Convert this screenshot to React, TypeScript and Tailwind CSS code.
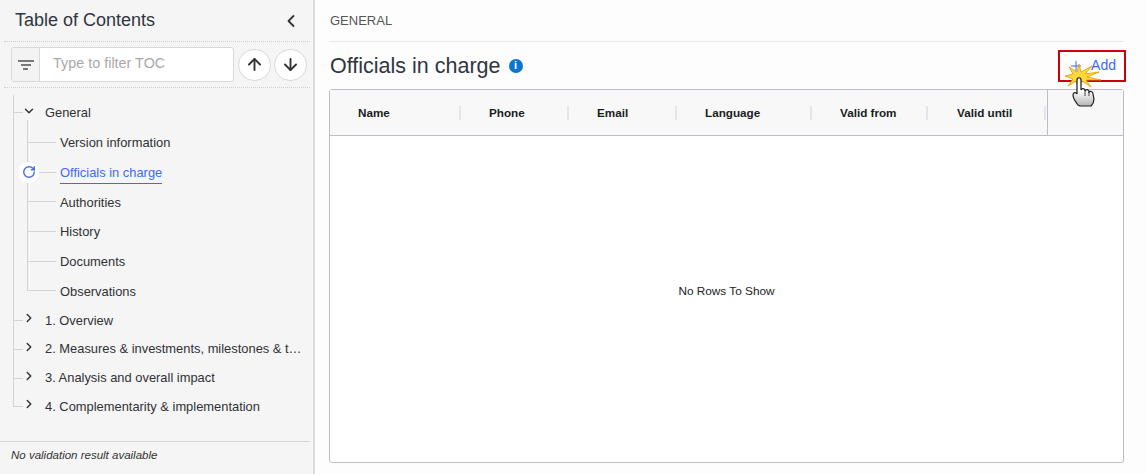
import React from 'react';
import { ArrowDown, ArrowUp, ChevronDown, ChevronLeft, ChevronRight, Plus, RotateCw } from 'lucide-react';

const font = { fontFamily: '"Liberation Sans", Arial, sans-serif' };

const sections = ['Version information', 'Officials in charge', 'Authorities', 'History', 'Documents', 'Observations'];
const chapters = [
  '1. Overview',
  '2. Measures & investments, milestones & targets',
  '3. Analysis and overall impact',
  '4. Complementarity & implementation',
];
const columns = [
  { name: 'Name', width: 'w-[131px]', pad: 'pl-[28px]' },
  { name: 'Phone', width: 'w-[108px]', pad: 'pl-[28px]' },
  { name: 'Email', width: 'w-[108px]', pad: 'pl-[28px]' },
  { name: 'Language', width: 'w-[135px]', pad: 'pl-[28px]' },
  { name: 'Valid from', width: 'w-[116px]', pad: 'pl-[28px]' },
  { name: 'Valid until', width: 'w-[118px]', pad: 'pl-[29px]' },
];

// click marker + hand cursor sitting over the Add button
const Burst = () => (
  <svg className="absolute left-[-2px] top-[11px]" width="52" height="46" viewBox="0 0 52 46">
    <defs>
      <linearGradient id="hand" x1="0" y1="0" x2="0" y2="1">
        <stop offset="0.45" stopColor="#ffffff" />
        <stop offset="1" stopColor="#b5b5b5" />
      </linearGradient>
    </defs>
    <polygon
      points="21,1 23,9 34,3 27,11 41,9 29,14 43,17 28,17 33,24 24,18 21,26 18,18 10,23 15,16 7,13 15,11 11,4 19,9"
      fill="#fcd93a"
      stroke="#e09a00"
      strokeWidth="0.8"
    />
    <path
      d="M20 42 C18 39 15 36 15 32 C15 29 18 29 19 31 L19 17 C19 14 23 14 23 17 L23 27 C24 25 27 25 27 28 C28 26 31 26 31 29 C32 28 35 28 35 31 L36 36 C36 39 34 42 33 43 L22 43 Z"
      fill="url(#hand)"
      stroke="#1c1c1c"
      strokeWidth="1.2"
    />
    <path d="M27 28 L27 33 M31 29 L31 33" stroke="#1c1c1c" strokeWidth="0.8" />
  </svg>
);

export default function App() {
  return (
    <div className="flex h-[474px] w-[1147px] overflow-hidden bg-[#fdfdfd] text-[#2f3136]" style={font}>
      {/* TOC panel */}
      <aside className="flex h-full w-[315px] shrink-0 flex-col border-r-2 border-[#dcdcdc] bg-[#f5f5f5]">
        <div className="flex h-[41px] items-center justify-between pl-[15px] pr-[12px]">
          <h2 className="text-[18px] text-[#2f3640]">Table of Contents</h2>
          <ChevronLeft size={20} strokeWidth={2.2} className="text-[#333]" />
        </div>
        <div className="mx-[4px] flex h-[47px] w-[306px] items-center border-y border-dotted border-[#cfcfcf] pl-[7px]">
          <div className="flex h-[35px] w-[223px] overflow-hidden rounded-[3px] border border-[#d9d9d9] bg-white">
            <div className="flex w-[28px] flex-col items-center justify-center gap-[2px] border-r border-[#d9d9d9] bg-[#f3f3f3]">
              <span className="h-[2px] w-[16px] bg-[#777]" />
              <span className="h-[2px] w-[10px] bg-[#777]" />
              <span className="h-[2px] w-[5px] bg-[#777]" />
            </div>
            <div className="flex items-center pb-[2px] pl-[13px] text-[14.4px] text-[#a9a9a9]">Type to filter TOC</div>
          </div>
          <button className="ml-[4px] flex h-[32px] w-[33px] items-center justify-center rounded-full border border-[#d9d9d9] bg-white">
            <ArrowUp size={19} strokeWidth={2.4} className="text-[#333]" />
          </button>
          <button className="ml-[3px] flex h-[32px] w-[33px] items-center justify-center rounded-full border border-[#d9d9d9] bg-white">
            <ArrowDown size={19} strokeWidth={2.4} className="text-[#333]" />
          </button>
        </div>

        {/* tree */}
        <div className="mt-[10px] flex-1 text-[12.9px]">
          <div className="relative flex h-[30px] items-center">
            <span className="absolute left-[13px] top-[-3px] bottom-0 w-px bg-[#d4d4d4]" />
            <span className="absolute left-[14px] top-[14px] h-px w-[9px] bg-[#d4d4d4]" />
            <span className="absolute left-[27px] top-[22px] bottom-0 w-px bg-[#d4d4d4]" />
            <ChevronDown size={14} strokeWidth={2.5} className="absolute left-[22px] top-[6px] text-[#333]" />
            <span className="pl-[45px]">General</span>
          </div>
          {sections.map((s, i) => {
            const active = i === 1;
            const last = i === sections.length - 1;
            return (
              <div key={s} className="relative flex h-[29.7px] items-center">
                <span className="absolute left-[13px] top-0 bottom-0 w-px bg-[#d4d4d4]" />
                <span className={`absolute left-[27px] top-0 w-px bg-[#d4d4d4] ${last ? 'h-[15px]' : 'bottom-0'}`} />
                <span className="absolute left-[28px] top-[14px] h-px w-[28px] bg-[#d4d4d4]" />
                {active && (
                  <span className="absolute left-[18px] top-[4px] flex h-[21px] w-[21px] items-center justify-center rounded-full bg-white">
                    <RotateCw size={14} strokeWidth={2.5} className="text-[#4a70e0]" />
                  </span>
                )}
                <span className={`ml-[60px] ${active ? 'border-b border-[#3f6af0] pb-[1px] pt-[2px] text-[#3f6af0]' : ''}`}>{s}</span>
              </div>
            );
          })}
          {chapters.map((c, i) => (
            <div key={c} className="relative flex h-[28.7px] items-center">
              <span className={`absolute left-[13px] top-0 w-px bg-[#d4d4d4] ${i === chapters.length - 1 ? 'h-[15px]' : 'bottom-0'}`} />
              <span className="absolute left-[14px] top-[14px] h-px w-[9px] bg-[#d4d4d4]" />
              <ChevronRight size={14} strokeWidth={2.5} className="absolute left-[22px] top-[5px] text-[#333]" />
              <span className="ml-[45px] w-[258px] truncate">{c}</span>
            </div>
          ))}
        </div>

        <div className="flex h-[33px] w-[310px] items-center border-t border-[#d6d6d6] pb-[5px] pl-[11px] text-[11.5px] italic text-[#333]">
          No validation result available
        </div>
      </aside>

      {/* main content */}
      <main className="flex h-full flex-1 flex-col pl-[14px] pr-[23px]">
        <div className="flex h-[42px] items-center border-b border-[#e8e8e8] pl-px text-[13px] text-[#555]">GENERAL</div>
        <div className="flex h-[47px] items-center justify-between">
          <div className="flex items-center gap-[8px] pl-px">
            <h1 className="pt-[1px] text-[21.5px] text-[#2f3640]">Officials in charge</h1>
            <span className="flex h-[14px] w-[14px] items-center justify-center rounded-full bg-[#0b76d1] text-[11px] font-bold leading-none text-white">
              i
            </span>
          </div>
          <div className="relative -mr-[2px] flex h-[32px] w-[68px] items-center justify-end gap-[7px] border-2 border-[#c8000f] pr-[8px] text-[14px] text-[#3f6af0]">
            <Plus size={16} strokeWidth={1.5} />
            <span>Add</span>
            <Burst />
          </div>
        </div>
        <div className="mb-[11px] flex flex-1 flex-col rounded-[3px] border border-[#bcbdc6] bg-white">
          <div className="flex h-[46px] items-center border-b border-[#bcbdc6] bg-[#f8f8f8] text-[11.7px] font-bold text-[#181d1f]">
            {columns.map((col) => (
              <div key={col.name} className={`flex h-[14px] items-center border-r-2 border-[#e2e5ec] pt-px ${col.width} ${col.pad}`}>
                {col.name}
              </div>
            ))}
            <div className="ml-px h-full flex-1 border-l border-[#bcbdc6]" />
          </div>
          <div className="flex flex-1 items-center justify-center pb-[14px] text-[11.8px] text-[#222]">No Rows To Show</div>
        </div>
      </main>
    </div>
  );
}
